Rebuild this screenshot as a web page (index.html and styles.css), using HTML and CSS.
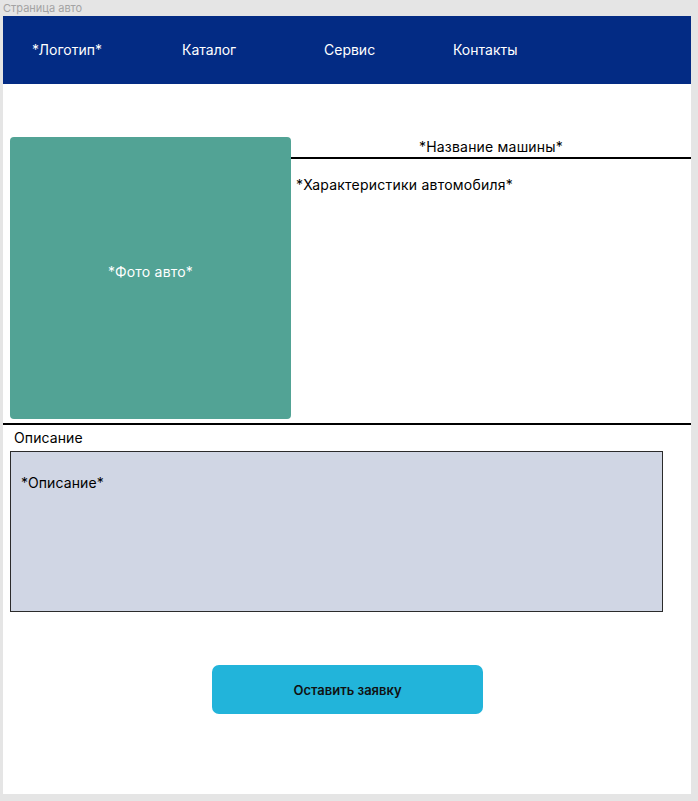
FILE: index.html
```html
<!DOCTYPE html>
<html lang="ru">
<head>
<meta charset="utf-8">
<title>Страница авто</title>
<link rel="stylesheet" href="styles.css">
</head>
<body>
<div class="frame-label">Страница авто</div>
<div class="frame">
  <header class="header">
    <span class="nav-item">*Логотип*</span>
    <span class="nav-item">Каталог</span>
    <span class="nav-item">Сервис</span>
    <span class="nav-item">Контакты</span>
  </header>
  <section class="car">
    <div class="photo">*Фото авто*</div>
    <div class="info">
      <div class="car-name">*Название машины*</div>
      <div class="specs">*Характеристики автомобиля*</div>
    </div>
  </section>
  <div class="divider"></div>
  <div class="desc-label">Описание</div>
  <div class="desc-box">*Описание*</div>
  <button class="cta">Оставить заявку</button>
</div>
</body>
</html>
```
FILE: styles.css
```css
* { box-sizing: border-box; }
html, body { margin: 0; padding: 0; }
body {
  background: #e5e5e5;
  font-family: Inter, "Noto Sans", sans-serif;
  font-size: 14px;
  color: #000;
  width: 698px;
  height: 801px;
  overflow: hidden;
}
.frame-label {
  height: 16px;
  padding-left: 3px;
  font-size: 11px;
  line-height: 16px;
  color: #a3a3a3;
}
.frame {
  margin-left: 3px;
  width: 688px;
  height: 778px;
  background: #fff;
}
.header {
  height: 68px;
  background: #032b84;
  display: grid;
  grid-template-columns: 150px 142px 129px auto;
  align-items: center;
  padding-left: 29px;
  color: #fff;
  font-size: 14px;
  padding-bottom: 2px;
}
.car {
  display: flex;
  padding-top: 53px;
}
.photo {
  margin-left: 7px;
  width: 281px;
  height: 282px;
  background: #52a395;
  border-radius: 4px;
  color: #fff;
  display: flex;
  align-items: center;
  justify-content: center;
  padding-bottom: 14px;
  letter-spacing: 0.2px;
}
.info { flex: 1; }
.car-name {
  height: 22px;
  line-height: 20px;
  text-align: center;
  border-bottom: 2px solid #000;
  letter-spacing: 0.2px;
}
.specs {
  padding: 16px 0 0 5px;
  line-height: 20px;
  letter-spacing: 0.22px;
}
.divider {
  margin-top: 4px;
  height: 2px;
  background: #000;
}
.desc-label {
  padding: 3px 0 0 11px;
  line-height: 20px;
  letter-spacing: 0.1px;
}
.desc-box {
  margin: 3px 0 0 7px;
  width: 653px;
  height: 161px;
  background: #d0d6e4;
  border: 1px solid #2b2b2b;
  padding: 21px 0 0 10px;
  line-height: 20px;
  letter-spacing: 0.1px;
}
.cta {
  display: block;
  margin: 53px 0 0 209px;
  width: 271px;
  height: 49px;
  border: none;
  border-radius: 7px;
  background: #22b4da;
  font-family: Inter, "Noto Sans", sans-serif;
  font-size: 13px;
  font-weight: 600;
  color: #111;
}
```
